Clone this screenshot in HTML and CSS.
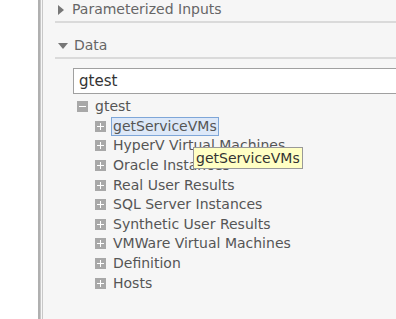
FILE: index.html
```html
<!DOCTYPE html>
<html lang="en">
<head>
    <meta charset="UTF-8">
    <title>Data Panel</title>
    <link rel="stylesheet" href="styles.css">
</head>
<body>
    <div class="page">
        <div class="gutter"></div>
        <div class="panel">
            <div class="section first">
                <span class="arrow arrow-right"></span>
                <span class="section-title">Parameterized Inputs</span>
            </div>
            <div class="section">
                <span class="arrow arrow-down"></span>
                <span class="section-title">Data</span>
            </div>
            <div class="search-row">
                <input class="search" type="text" value="gtest">
            </div>
            <ul class="tree">
                <li class="node">
                    <div class="row"><span class="toggle minus"></span><span class="label">gtest</span></div>
                    <ul class="children">
                        <li class="row"><span class="toggle plus"></span><span class="label selected">getServiceVMs</span></li>
                        <li class="row"><span class="toggle plus"></span><span class="label">HyperV Virtual Machines</span></li>
                        <li class="row"><span class="toggle plus"></span><span class="label">Oracle Instances</span></li>
                        <li class="row"><span class="toggle plus"></span><span class="label">Real User Results</span></li>
                        <li class="row"><span class="toggle plus"></span><span class="label">SQL Server Instances</span></li>
                        <li class="row"><span class="toggle plus"></span><span class="label">Synthetic User Results</span></li>
                        <li class="row"><span class="toggle plus"></span><span class="label">VMWare Virtual Machines</span></li>
                        <li class="row"><span class="toggle plus"></span><span class="label">Definition</span></li>
                        <li class="row"><span class="toggle plus"></span><span class="label">Hosts</span></li>
                    </ul>
                </li>
            </ul>
            <div class="tooltip">getServiceVMs</div>
        </div>
    </div>
</body>
</html>
```

FILE: styles.css
```css
body {
    margin: 0;
    font-family: "DejaVu Sans", sans-serif;
    font-size: 14px;
    color: #555;
}

.page {
    display: flex;
    height: 319px;
    overflow: hidden;
}

.gutter {
    width: 38px;
    flex: none;
    background: #fff;
    border-right: 2px solid #b0b0b0;
}

.panel {
    position: relative;
    flex: 1;
    background: #f6f6f6;
    border-left: 3px double #c8c8c8;
    padding-left: 12px;
    overflow: hidden;
}

.section {
    display: flex;
    align-items: center;
    height: 17px;
    padding: 14px 0 3px 3px;
    border-bottom: 2px solid #dadada;
    line-height: 17px;
}

.section.first {
    padding-top: 1px;
}

.arrow {
    width: 0;
    height: 0;
    margin-right: 8px;
}

.arrow-right {
    border-top: 5px solid transparent;
    border-bottom: 5px solid transparent;
    border-left: 6px solid #777;
}

.arrow-down {
    border-left: 5px solid transparent;
    border-right: 5px solid transparent;
    border-top: 6px solid #777;
    margin-right: 6px;
}

.section-title {
    color: #666;
}

.search-row {
    display: flex;
    padding: 9px 0 0 18px;
}

.search {
    width: 340px;
    height: 26px;
    box-sizing: border-box;
    border: 1px solid #a0a0a0;
    border-right: none;
    padding: 0 5px;
    font-family: inherit;
    font-size: 15px;
    color: #333;
    background: #fff;
    outline: none;
}

.tree,
.children {
    list-style: none;
    margin: 0;
    padding: 0;
}

.tree {
    padding: 3px 0 0 22px;
}

.children {
    padding-left: 18px;
}

.row {
    display: flex;
    align-items: center;
    height: 19.6px;
}

.toggle {
    position: relative;
    width: 11px;
    height: 11px;
    background: #a8a8a8;
    margin-right: 6px;
    flex: none;
}

.toggle::before,
.toggle::after {
    content: "";
    position: absolute;
    background: #fff;
}

.toggle::before {
    left: 2px;
    top: 5px;
    width: 7px;
    height: 1px;
}

.plus::after {
    left: 5px;
    top: 2px;
    width: 1px;
    height: 7px;
}

.label {
    padding: 0 1px 0 0;
    border: 1px solid transparent;
    line-height: 17px;
    color: #555;
}

.selected {
    background: #dde8f8;
    border-color: #7ea6d8;
    padding-left: 1px;
    margin-left: -1px;
}

.tooltip {
    position: absolute;
    left: 150px;
    top: 147px;
    padding: 0 2px;
    height: 20px;
    line-height: 20px;
    background: #ffffc4;
    border: 1px solid #999;
    color: #333;
}
```
